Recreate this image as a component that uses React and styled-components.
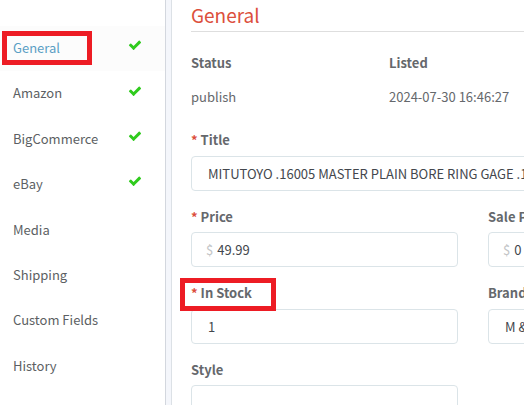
import React from 'react';
import styled, { createGlobalStyle, css } from 'styled-components';

const GlobalStyle = createGlobalStyle`
  *, *::before, *::after { box-sizing: border-box; }
  html, body { margin: 0; }
  body {
    background: #fff;
    color: #65686c;
    font-family: "Noto Sans CJK SC", "Noto Sans", sans-serif;
    font-size: 13px;
    line-height: 1.5;
  }
`;

const Page = styled.div`
  display: flex;
  height: 100vh;
  overflow: hidden;
  background: #f4f6fb;
`;

const Sidebar = styled.nav`
  flex: none;
  width: 166px;
  padding-top: 26px;
  background: #fff;
  border-right: 1px solid #d3d7de;
`;

const NavList = styled.ul`
  list-style: none;
  margin: 0;
  padding: 0;
`;

const NavLink = styled.a`
  position: relative;
  display: flex;
  align-items: center;
  justify-content: space-between;
  padding: 10px 23px 12px 13px;
  font-size: 13px;
  line-height: 1.8;
  text-decoration: none;
  color: ${(p) => (p.$active ? '#5a9fc4' : '#5c5f63')};
  background: ${(p) => (p.$active ? '#fcfcfc' : 'transparent')};
`;

const CheckSvg = styled.svg`
  width: 14px;
  height: 14px;
  margin-bottom: 5px;
  fill: #2fcb1d;
`;

const outline = css`
  position: absolute;
  border: 5px solid #ed1c24;
  pointer-events: none;
`;

const NavHighlight = styled.span`
  ${outline}
  left: 2px;
  top: 5px;
  width: 90px;
  height: 34px;
`;

const LabelHighlight = styled.span`
  ${outline}
  left: -11px;
  top: -5px;
  width: 96px;
  height: 33px;
`;

const Main = styled.main`
  flex: 1 0 auto;
  min-width: 604px;
  margin-left: 5px;
  padding: 0 20px 0 19px;
  background: #fff;
  border-left: 1px solid #dce1e6;
`;

const Heading = styled.h1`
  margin: 0 0 21px;
  padding-bottom: 1px;
  border-bottom: 1px solid #dedede;
  color: #dc4f3c;
  font-size: 19px;
  font-weight: 400;
  line-height: 30px;
`;

const Facts = styled.dl`
  display: grid;
  grid-template-columns: repeat(3, 1fr);
  gap: 30px;
  margin: 0 0 23px;
`;

const FactName = styled.dt`
  margin-bottom: 14px;
  font-weight: 600;
  line-height: 20px;
`;

const FactValue = styled.dd`
  margin: 0;
  line-height: 20px;
`;

const Form = styled.form`
  display: grid;
  grid-template-columns: repeat(2, 1fr);
  gap: 16px 30px;
`;

const Field = styled.div`
  position: relative;
  grid-column: ${(p) => (p.$wide ? '1 / -1' : 'auto')};
`;

const Label = styled.label`
  display: block;
  margin-bottom: 6px;
  font-weight: 600;
`;

const Required = styled.span`
  margin-right: 3px;
  color: #dc4f3c;
`;

const InputBox = styled.div`
  display: flex;
  align-items: center;
  gap: 4px;
  height: 35px;
  padding: 0 ${(p) => (p.$money ? '14px' : '16px')};
  border: 1px solid #dbe4e8;
  border-radius: 4px;
  background: #fff;
`;

const Currency = styled.span`
  color: #c4c6c8;
`;

const Input = styled.input`
  flex: 1;
  min-width: 0;
  height: 100%;
  padding: 0;
  border: 0;
  outline: 0;
  background: transparent;
  color: #43474d;
  font: inherit;
`;

const navItems = [
  { name: 'General', done: true, active: true },
  { name: 'Amazon', done: true },
  { name: 'BigCommerce', done: true },
  { name: 'eBay', done: true },
  { name: 'Media' },
  { name: 'Shipping' },
  { name: 'Custom Fields' },
  { name: 'History' },
];

const fields = [
  { id: 'title', label: 'Title', required: true, wide: true, value: 'MITUTOYO .16005 MASTER PLAIN BORE RING GAGE .15' },
  { id: 'price', label: 'Price', required: true, money: true, value: '49.99' },
  { id: 'sale', label: 'Sale Price', money: true, value: '0' },
  { id: 'stock', label: 'In Stock', required: true, highlight: true, value: '1' },
  { id: 'brand', label: 'Brand', value: 'M &' },
  { id: 'style', label: 'Style', value: '' },
];

const Check = () => (
  <CheckSvg viewBox="0 0 1792 1792" role="img" aria-label="Complete">
    <path d="M1671 566q0 40-28 68l-724 724-136 136q-28 28-68 28t-68-28l-136-136-362-362q-28-28-28-68t28-68l136-136q28-28 68-28t68 28l294 295 656-657q28-28 68-28t68 28l136 136q28 28 28 68z" />
  </CheckSvg>
);

export default function App() {
  return (
    <>
      <GlobalStyle />
      <Page>
        <Sidebar>
          <NavList>
            {navItems.map((item) => (
              <li key={item.name}>
                <NavLink href="#" $active={item.active} aria-current={item.active ? 'page' : undefined}>
                  {item.name}
                  {item.done && <Check />}
                  {item.active && <NavHighlight />}
                </NavLink>
              </li>
            ))}
          </NavList>
        </Sidebar>
        <Main>
          <Heading>General</Heading>
          <Facts>
            <div>
              <FactName>Status</FactName>
              <FactValue>publish</FactValue>
            </div>
            <div>
              <FactName>Listed</FactName>
              <FactValue>2024-07-30 16:46:27</FactValue>
            </div>
          </Facts>
          <Form>
            {fields.map((f) => (
              <Field key={f.id} $wide={f.wide}>
                <Label htmlFor={f.id}>
                  {f.required && <Required>*</Required>}
                  {f.label}
                </Label>
                <InputBox $money={f.money}>
                  {f.money && <Currency>$</Currency>}
                  <Input id={f.id} defaultValue={f.value} />
                </InputBox>
                {f.highlight && <LabelHighlight />}
              </Field>
            ))}
          </Form>
        </Main>
      </Page>
    </>
  );
}
